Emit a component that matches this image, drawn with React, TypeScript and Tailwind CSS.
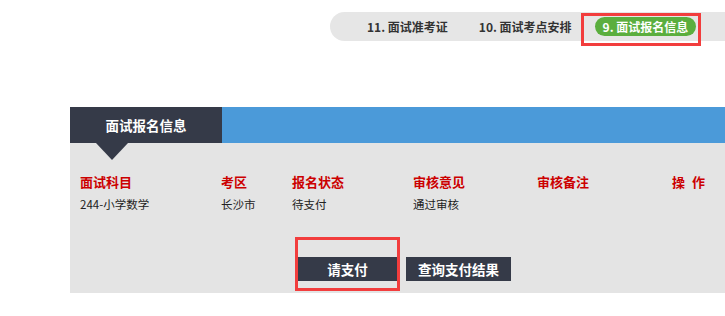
import React from "react";

const FONT = { fontFamily: '"Noto Sans CJK SC", "Liberation Sans", sans-serif' };

const COLS = [
  { label: "面试科目", w: "w-[141px]", value: "244-小学数学" },
  { label: "考区", w: "w-[71px]", value: "长沙市" },
  { label: "报名状态", w: "w-[121px]", value: "待支付" },
  { label: "审核意见", w: "w-[124px]", value: "通过审核" },
  { label: "审核备注", w: "w-[135px]", value: "" },
];

export default function App() {
  return (
    <div className="relative w-[725px] h-[316px] bg-white overflow-hidden" style={FONT}>
      {/* step nav */}
      <div className="flex justify-end pt-[12px]">
        <div className="w-[395px] h-[29px] rounded-l-full bg-[#e6e6e6] flex items-center text-[12px] font-bold text-[#333]">
          <span className="ml-[37px]">11. 面试准考证</span>
          <span className="ml-[31px]">10. 面试考点安排</span>
          <span className="ml-[23px] h-[19px] px-[8px] rounded-full bg-[#5bae3e] text-white flex items-center">
            9. 面试报名信息
          </span>
        </div>
      </div>

      {/* panel */}
      <div className="ml-[70px] mt-[66px]">
        <div className="flex h-[36px]">
          <div className="relative w-[152px] bg-[#353a48] text-white text-[13.5px] font-bold flex items-center justify-center">
            面试报名信息
            <div className="absolute left-[26px] top-[36px] w-0 h-0 border-l-[16px] border-r-[16px] border-t-[17px] border-l-transparent border-r-transparent border-t-[#353a48]" />
          </div>
          <div className="flex-1 bg-[#4b9ad9]" />
        </div>
        <div className="bg-[#e4e4e4] h-[150px] pl-[10px] pt-[31px]">
          <div className="flex">
            {COLS.map((c) => (
              <div key={c.label} className={`${c.w} shrink-0`}>
                <div className="text-[13px] leading-[16px] font-bold text-[#cc0000]">{c.label}</div>
                <div className="mt-[6px] text-[11.5px] leading-[16px] text-[#222]">{c.value}</div>
              </div>
            ))}
            <div className="flex gap-[7px] text-[13px] leading-[16px] font-bold text-[#cc0000]">
              <span>操</span>
              <span>作</span>
            </div>
          </div>
          <div className="flex gap-[7px] ml-[216px] mt-[45px]">
            <button className="w-[103px] h-[24px] bg-[#353a48] text-white text-[13.5px] font-bold">请支付</button>
            <button className="w-[105px] h-[24px] bg-[#353a48] text-white text-[13.5px] font-bold">查询支付结果</button>
          </div>
        </div>
      </div>

      {/* annotation boxes */}
      <div className="absolute left-[581px] top-[13px] w-[120px] h-[33px] border-[3px] border-[#f23d3d]" />
      <div className="absolute left-[295px] top-[237px] w-[105px] h-[54px] border-[3px] border-[#f23d3d]" />
    </div>
  );
}
